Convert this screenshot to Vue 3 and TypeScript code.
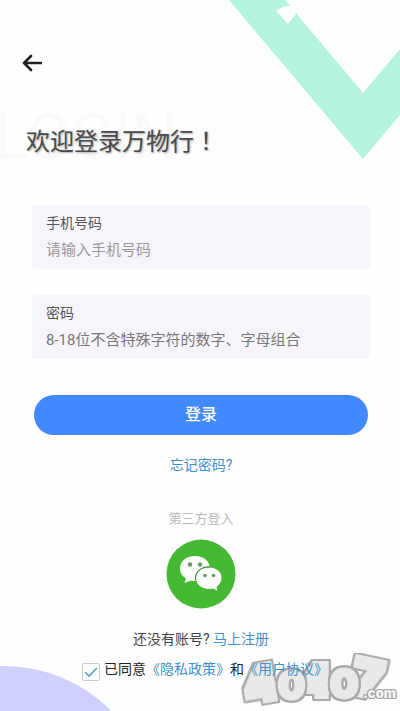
<script setup lang="ts">
import { ref } from 'vue'

const phone = ref('')
const password = ref('')
const agreed = ref(true)
</script>

<template>
  <main class="page">
    <svg class="chevron" width="172" height="160" viewBox="0 0 172 160" aria-hidden="true">
      <path d="M1 0H57L135 93L172 49V115L135 159Z" fill="#b3f3e0" />
      <path d="M48 11Q55 6 61 6H66L68 14L60 24Z" fill="#fff" />
    </svg>
    <svg class="circle" width="110" height="45" viewBox="0 0 110 45" aria-hidden="true">
      <circle cx="4" cy="151" r="151" fill="#d0d0ff" />
    </svg>

    <button class="back" type="button" aria-label="返回">
      <svg width="20" height="18" viewBox="0 0 20 18" aria-hidden="true">
        <path d="M9 2L2 9L9 16M2 9H19" fill="none" stroke="#222" stroke-width="2.6" stroke-linecap="round" stroke-linejoin="round" />
      </svg>
    </button>

    <header class="heading">
      <span class="ghost" aria-hidden="true">LOGIN</span>
      <h1>欢迎登录万物行<span class="bang">！</span></h1>
    </header>

    <form class="form" @submit.prevent>
      <div class="field">
        <label for="phone">手机号码</label>
        <input id="phone" v-model="phone" type="tel" placeholder="请输入手机号码" />
      </div>
      <div class="field dark">
        <label for="password">密码</label>
        <input id="password" v-model="password" type="password" placeholder="8-18位不含特殊字符的数字、字母组合" />
      </div>
      <button class="submit" type="submit">登录</button>
    </form>

    <a class="forgot" href="#forgot">忘记密码?</a>
    <p class="third">第三方登入</p>
    <button class="wechat" type="button" aria-label="微信登录">
      <svg width="70" height="70" viewBox="0 0 70 70" aria-hidden="true">
        <circle cx="35" cy="35" r="34.5" fill="#45b934" />
        <path d="M29 17C20 17 14 22.500 14 29.500C14 34 16 37 20 39.500L18.500 44L25 41.500C35 44 44 37 44 29.500C44 22.500 38 17 29 17Z" fill="#fff" />
        <path d="M43 28C35 28 29.500 32.500 29.500 39C29.500 46.500 37 52 47 50L52 52.500L51 48C54 45.500 56 42.500 56 39C56 32.500 50 28 43 28Z" fill="#fff" stroke="#45b934" stroke-width="1" />
        <path d="M29.500 41C28.500 33 36 27 44 28" fill="none" stroke="#3f7f38" stroke-width="1" />
        <g fill="#639d60"><circle cx="24" cy="25.500" r="2.200" /><circle cx="34" cy="25.500" r="2.200" /><circle cx="39" cy="36.500" r="1.800" /><circle cx="47.500" cy="36.500" r="1.800" /></g>
      </svg>
    </button>

    <p class="register">还没有账号? <a href="#register">马上注册</a></p>
    <div class="agree">
      <input id="agree" v-model="agreed" type="checkbox" />
      <label for="agree">已同意<a href="#privacy">《隐私政策》</a>和<a href="#terms">《用户协议》</a></label>
    </div>

    <svg class="mark" width="160" height="58" viewBox="0 0 160 58" role="img" aria-label="40407.com">
      <text class="wide" x="4" y="48" font-size="48" transform="rotate(-10 20 32)">4</text>
      <text class="wide" x="60" y="43" font-size="44">4</text>
      <text class="wide" x="112" y="43" font-size="50" transform="rotate(12 128 28)">7</text>
      <text x="38" y="46" font-size="38">0</text>
      <text x="90" y="45" font-size="40">0</text>
      <text class="com" x="123" y="45" font-size="13">.com</text>
    </svg>
  </main>
</template>

<style>
body {
  margin: 0;
  background: #fefefe;
}
</style>

<style scoped>
.page {
  position: relative;
  display: flex;
  flex-direction: column;
  align-items: center;
  box-sizing: border-box;
  min-height: 100vh;
  padding: 52px 0 24px 2px;
  overflow: hidden;
  background: #fefefe;
  font-family: Roboto, "Noto Sans CJK SC", sans-serif;
  font-size: 14px;
  line-height: 20px;
  color: #444;
}
p,
h1 {
  margin: 0;
}
a {
  color: #3e8fcb;
  text-decoration: none;
}
button {
  border: 0;
  padding: 0;
  background: none;
  font: inherit;
}
svg {
  display: block;
}
.chevron {
  position: absolute;
  top: 0;
  right: 0;
}
.circle {
  position: absolute;
  bottom: 0;
  left: 0;
}
.back {
  align-self: flex-start;
  margin-left: 20px;
  padding: 2px 0;
}
.heading {
  position: relative;
  align-self: stretch;
  margin-top: 50px;
  padding: 0 24px;
}
.heading h1 {
  position: relative;
  font-size: 24px;
  line-height: 32px;
  font-weight: 400;
  color: #4a4a4a;
  text-shadow: 1px 1px 2px #aaa;
}
.bang {
  font-family: "Noto Sans CJK JP", sans-serif;
}
.ghost {
  position: absolute;
  left: -8px;
  top: -24px;
  font-size: 64px;
  line-height: 75px;
  color: #f9f9f9;
}
.form {
  align-self: stretch;
  display: flex;
  flex-direction: column;
  gap: 26px;
  margin-top: 47px;
  padding: 0 30px;
}
.field {
  display: flex;
  flex-direction: column;
  gap: 6px;
  padding: 8px 14px;
  border-radius: 4px;
  background: #f7f4fc;
}
.field label {
  color: #555;
}
.field input {
  height: 22px;
  padding: 0;
  border: 0;
  outline: 0;
  background: none;
  font: inherit;
  font-size: 15px;
  color: #444;
}
.field input::placeholder {
  color: #999;
  opacity: 1;
}
.dark input::placeholder {
  color: #777;
}
.submit {
  height: 40px;
  margin: 10px 2px 0;
  border-radius: 20px;
  background: #4189ff;
  color: #fff;
  font-size: 16px;
  font-weight: 500;
}
.forgot {
  margin-top: 20px;
}
.third {
  margin-top: 34px;
  font-size: 13px;
  color: #bbb;
}
.wechat {
  margin-top: 10px;
}
.register {
  margin-top: 20px;
}
.agree {
  position: relative;
  z-index: 1;
  display: flex;
  align-items: center;
  gap: 4px;
  align-self: flex-start;
  margin: 8px 0 0 80px;
}
.agree label {
  color: #222;
  white-space: nowrap;
}
.agree input {
  appearance: none;
  width: 18px;
  height: 18px;
  margin: 6px 0 0;
  border: 1px solid #ccc;
  border-radius: 2px;
  background: #fff;
}
.agree input:checked {
  background: #fff url("data:image/svg+xml,%3Csvg xmlns='http://www.w3.org/2000/svg' viewBox='0 0 16 16'%3E%3Cpath d='M2 8L6 12L14 4' fill='none' stroke='%235a9fc8' stroke-width='1.6'/%3E%3C/svg%3E");
}
.mark {
  position: absolute;
  right: 0;
  bottom: 0;
  pointer-events: none;
}
.mark text {
  fill: #e9e9e9;
  stroke: #e9e9e9;
  stroke-width: 3px;
  font-family: Inter, Roboto, sans-serif;
  font-weight: 900;
  filter: drop-shadow(2px 0 0 #aaa) drop-shadow(-2px 0 0 #aaa) drop-shadow(0 2px 0 #aaa) drop-shadow(0 -2px 0 #aaa);
}
.mark .wide {
  stroke-width: 6px;
}
.mark .com {
  fill: #f4f4f4;
  stroke-width: 0;
  filter: drop-shadow(1px 0 0 #aaa) drop-shadow(-1px 0 0 #aaa) drop-shadow(0 1px 0 #aaa) drop-shadow(0 -1px 0 #aaa);
}
</style>
